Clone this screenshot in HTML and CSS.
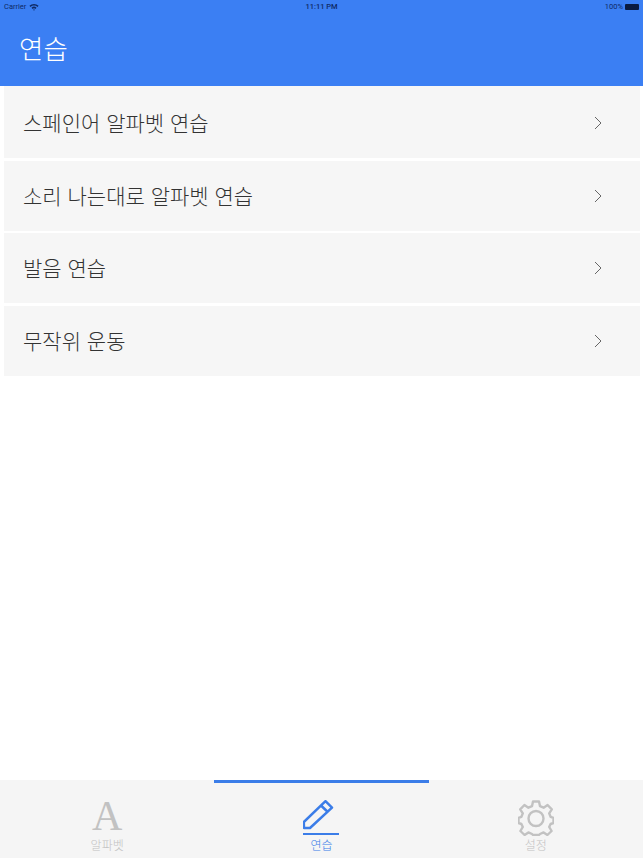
FILE: index.html
```html
<!DOCTYPE html>
<html lang="ko">
<head>
  <meta charset="UTF-8" />
  <meta name="viewport" content="width=device-width, initial-scale=1.0"/>
  <title>연습</title>
  <link rel="stylesheet" href="styles.css">
</head>
<body>

  <!-- Header with status bar -->
  <div class="top-bar">
    <div class="status-bar">
      <div class="status-left">
        <span>Carrier</span>
        <svg class="wifi" viewBox="0 0 12 9" width="10" height="8">
          <path d="M0.5 3 A8 8 0 0 1 11.5 3 L10.2 4.4 A6 6 0 0 0 1.8 4.4 Z M3 5.4 A4.4 4.4 0 0 1 9 5.4 L7.7 6.8 A2.5 2.5 0 0 0 4.3 6.8 Z M6 9 L5 7.7 A1.5 1.5 0 0 1 7 7.7 Z" fill="#0f2a66"/>
        </svg>
      </div>
      <div class="status-time">11:11 PM</div>
      <div class="status-right">
        <span>100%</span>
        <span class="battery"></span>
      </div>
    </div>
    <div class="title">연습</div>
  </div>

  <!-- Menu -->
  <div class="menu">
    <div class="menu-row menu-row-first">
      <span class="menu-text">스페인어 알파벳 연습</span>
      <svg class="chevron" viewBox="0 0 8 14" width="8" height="14"><path d="M1 1 L7 7 L1 13" /></svg>
    </div>
    <div class="menu-row">
      <span class="menu-text">소리 나는대로 알파벳 연습</span>
      <svg class="chevron" viewBox="0 0 8 14" width="8" height="14"><path d="M1 1 L7 7 L1 13" /></svg>
    </div>
    <div class="menu-row">
      <span class="menu-text">발음 연습</span>
      <svg class="chevron" viewBox="0 0 8 14" width="8" height="14"><path d="M1 1 L7 7 L1 13" /></svg>
    </div>
    <div class="menu-row">
      <span class="menu-text">무작위 운동</span>
      <svg class="chevron" viewBox="0 0 8 14" width="8" height="14"><path d="M1 1 L7 7 L1 13" /></svg>
    </div>
  </div>

  <!-- Tab bar -->
  <div class="tab-bar">
    <div class="tab">
      <div class="tab-icon tab-letter">A</div>
      <div class="tab-label">알파벳</div>
    </div>
    <div class="tab tab-active">
      <svg class="tab-icon" viewBox="0 0 36 36" width="36" height="36">
        <path d="M0.8 22 L22.5 1.2 L29 7.6 L7 28 H1 Z M18 5.5 L24.8 12" fill="none" stroke="#3b7de8" stroke-width="2.5" stroke-linejoin="round"/>
        <path d="M0 34 H36" stroke="#3b7de8" stroke-width="2.2"/>
      </svg>
      <div class="tab-label">연습</div>
    </div>
    <div class="tab">
      <svg class="tab-icon" viewBox="0 0 36 36" width="36" height="36">
        <path d="M15 1.5 H21 L22 6.2 L25.6 7.7 L29.6 5 L33.8 9.4 L31.2 13.4 L32.6 16.8 L35.5 17.8 V23 L32.6 24 L31.2 27 L33.6 31 L29.4 35 L25.6 32.4 L22 34 L21 35 H15 L14 34 L10.4 32.4 L6.6 35 L2.4 31 L4.8 27 L3.4 24 L0.5 23 V17.8 L3.4 16.8 L4.8 13.4 L2.2 9.4 L6.4 5 L10.4 7.7 L14 6.2 Z" fill="none" stroke="#c2c2c2" stroke-width="2.4" stroke-linejoin="round"/>
        <circle cx="18" cy="18.5" r="7.5" fill="none" stroke="#c2c2c2" stroke-width="2.4"/>
      </svg>
      <div class="tab-label">설정</div>
    </div>
  </div>

</body>
</html>
```
FILE: styles.css
```css
body {
  font-family: "Noto Sans CJK KR", "Noto Sans", sans-serif;
  background-color: #fff;
  color: #333;
  margin: 0;
  padding: 0;
  height: 858px;
  display: flex;
  flex-direction: column;
  overflow: hidden;
}

.top-bar {
  height: 86px;
  flex-shrink: 0;
  background-color: #3b7ff3;
  color: #fff;
}

.status-bar {
  height: 13px;
  padding: 0 4px;
  display: grid;
  grid-template-columns: 1fr auto 1fr;
  align-items: center;
  font-family: "Roboto", sans-serif;
  font-size: 7.5px;
  color: #0f2a66;
}

.status-left {
  display: flex;
  align-items: center;
  gap: 3px;
}

.status-time {
  font-weight: 500;
}

.status-right {
  display: flex;
  justify-content: flex-end;
  align-items: center;
  gap: 2px;
}

.battery {
  width: 14px;
  height: 6px;
  background-color: #0a1a40;
  border-radius: 1px;
}

.title {
  padding: 14px 0 0 19px;
  font-size: 26.5px;
  font-weight: 300;
  line-height: 42px;
}

.menu {
  padding: 0 3px 0 4px;
  display: flex;
  flex-direction: column;
  gap: 2.67px;
}

.menu-row {
  height: 70px;
  background-color: #f6f6f6;
  display: flex;
  justify-content: space-between;
  align-items: center;
  padding: 0 38px 0 19px;
  font-size: 21px;
  font-weight: 300;
}

.menu-row-first {
  height: 72px;
  padding-top: 2px;
  box-sizing: border-box;
}

.menu-text {
  margin-bottom: 2px;
}

.chevron path {
  fill: none;
  stroke: #666;
  stroke-width: 1;
}

.tab-bar {
  margin-top: auto;
  height: 78px;
  background-color: #f5f5f5;
  display: flex;
}

.tab {
  flex: 1;
  display: flex;
  flex-direction: column;
  align-items: center;
  padding-top: 17px;
  border-top: 3px solid transparent;
  color: #c2c2c2;
}

.tab-active {
  border-top-color: #3b7de8;
  color: #3b7de8;
}

.tab-icon {
  height: 36px;
}

.tab-letter {
  font-family: "Liberation Serif", serif;
  font-size: 42px;
  line-height: 32px;
}

.tab-label {
  font-size: 12px;
  font-weight: 300;
  line-height: 14px;
  margin-top: 2px;
}
```
